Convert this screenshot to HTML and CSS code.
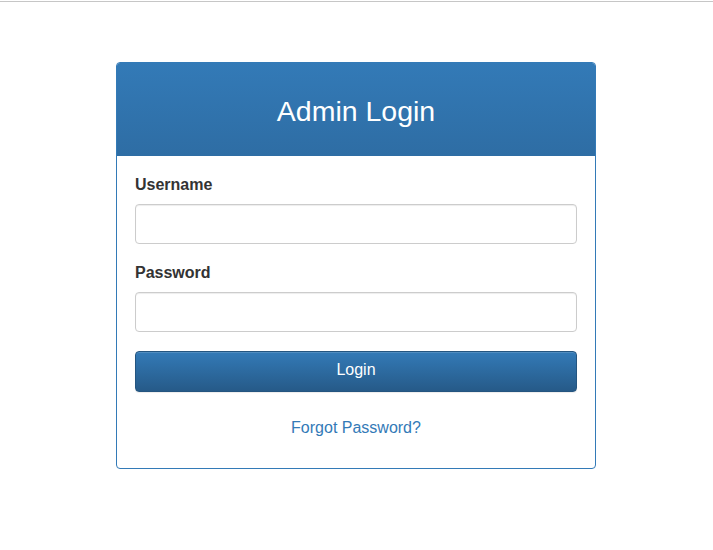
FILE: index.html
```html
<!DOCTYPE html>
<html lang="en">

<head>
  <meta charset="UTF-8">
  <meta name="viewport" content="width=device-width, initial-scale=1.0">
  <title>Admin Login</title>
  <link rel="stylesheet" href="styles.css">
</head>

<body>

  <div class="top-line"></div>

  <div class="wrapper">
    <!-- Login Panel -->
    <div class="login-panel">
      <div class="panel-heading">
        <h3>Admin Login</h3>
      </div>
      <div class="panel-body">
        <form id="loginForm">
          <div class="form-group">
            <label for="username">Username</label>
            <input type="text" id="username">
          </div>
          <div class="form-group">
            <label for="password">Password</label>
            <input type="password" id="password">
          </div>
          <button type="submit" class="login-button">Login</button>
        </form>
        <p class="forgot"><a href="#">Forgot Password?</a></p>
      </div>
    </div>
  </div>

</body>

</html>
```
FILE: styles.css
```css
/* Global Styles */
html,
body {
  margin: 0;
  padding: 0;
  background: #fff;
  font-family: 'Liberation Sans', Arial, sans-serif;
  font-size: 16px;
  line-height: 1.5;
  color: #333;
}

.top-line {
  height: 1px;
  margin-top: 1px;
  background-color: #c6c6c6;
}

.wrapper {
  display: flex;
  justify-content: center;
  padding-top: 60px;
  padding-right: 1px;
}

/* Panel Styles */
.login-panel {
  width: 478px;
  border: 1px solid #337ab7;
  border-radius: 4px;
  background-color: #fff;
}

.panel-heading {
  height: 89px;
  padding-top: 4px;
  display: flex;
  justify-content: center;
  align-items: center;
  border-radius: 3px 3px 0 0;
  background-image: linear-gradient(to bottom, #337ab7 0%, #2e6da4 100%);
}

.panel-heading h3 {
  margin: 0;
  font-size: 28.5px;
  font-weight: 400;
  line-height: 1.1;
  color: #fff;
}

.panel-body {
  padding: 17px 18px 18px;
}

/* Form Styles */
.form-group {
  margin-bottom: 17px;
}

label {
  display: block;
  margin-bottom: 7px;
  font-weight: 700;
}

input {
  display: block;
  box-sizing: border-box;
  width: 100%;
  height: 40px;
  padding: 6px 12px;
  border: 1px solid #ccc;
  border-radius: 4px;
  box-shadow: inset 0 1px 1px rgba(0, 0, 0, 0.075);
  font-family: inherit;
  font-size: 16px;
  color: #555;
}

.login-button {
  display: block;
  box-sizing: border-box;
  width: 100%;
  height: 41px;
  margin-top: 19px;
  padding: 0 12px 3px;
  border: 1px solid #245580;
  border-radius: 4px;
  background-image: linear-gradient(to bottom, #337ab7 0%, #265a88 100%);
  box-shadow: inset 0 1px 0 rgba(255, 255, 255, 0.15), 0 1px 1px rgba(0, 0, 0, 0.075);
  font-family: inherit;
  font-size: 16px;
  color: #fff;
  cursor: pointer;
}

.forgot {
  margin: 24px 0 10px;
  text-align: center;
}

.forgot a {
  color: #337ab7;
  text-decoration: none;
}
```
